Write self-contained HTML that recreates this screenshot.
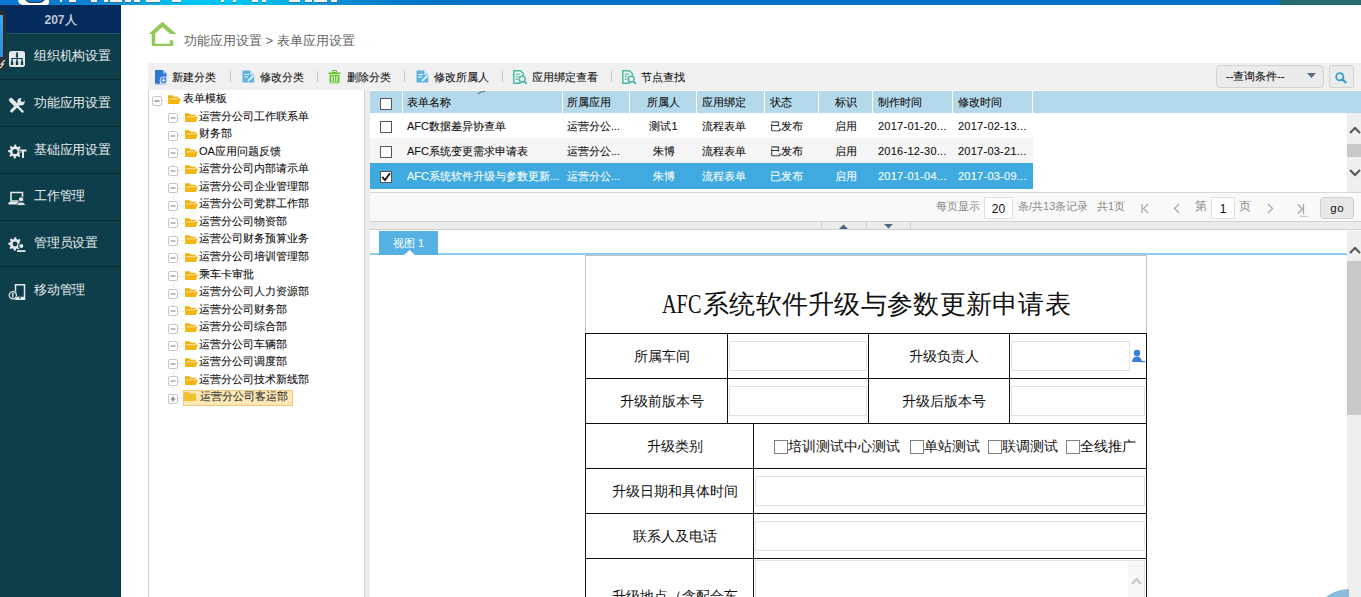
<!DOCTYPE html><html><head><meta charset="utf-8"><style>
*{box-sizing:border-box;margin:0;padding:0}
html,body{width:1361px;height:597px;overflow:hidden;background:#fff;font-family:"Liberation Sans",sans-serif;position:relative}
.a{position:absolute}
svg.i{position:absolute;overflow:visible}
#band{left:0;top:0;width:1361px;height:5px;overflow:hidden;background:linear-gradient(90deg,#0a78d2 0px,#0a82d4 90px,#0a9edd 130px,#04c2ee 180px,#06c6f0 240px,#0aa6df 300px,#0a8cd3 345px,#0078c8 400px,#0070c4 460px,#0070c4 1280px,#246a6e 1280px)}
#side{left:0;top:5px;width:121px;height:592px;background:#0f3e4b}
#navy{left:0;top:0;width:121px;height:29px;background:#052a5c;border-bottom:1px solid #245564;color:#c0c8d6;font-weight:bold;font-size:12px;text-align:center;line-height:30px}
.mi{position:absolute;left:0;width:121px;height:47px;border-top:1px solid #0a2c35;color:#e4eaec;font-size:13px;letter-spacing:-0.25px}
.mt{position:absolute;left:34px;line-height:16px;white-space:nowrap;color:#e4eaec;font-size:13px;letter-spacing:-0.25px}
#crumb{left:184px;top:32px;font-size:13px;color:#666;line-height:18px;white-space:nowrap}
#tb{left:148px;top:63px;width:1213px;height:27px;background:#f0f0f0}
.tbi{position:absolute;top:6px;font-size:11px;color:#111;line-height:16px;white-space:nowrap;-webkit-text-stroke-width:0.1px}
.sep{position:absolute;top:8px;width:1px;height:11px;background:#c8c8c8}
#tree{left:148px;top:90px;width:217px;height:512px;border:1px solid #d4d4d4;border-top:none;background:#fff}
.tn{position:absolute;height:16px;font-size:11px;line-height:13px;color:#111;white-space:nowrap;-webkit-text-stroke-width:0.1px}
#split1{left:365px;top:90px;width:5px;height:507px;background:#ececec}
#grid{left:370px;top:91px;width:991px;height:101px;background:#fff}
.gh{position:absolute;top:0;height:22px;background:#b4d9ea;font-size:11px;line-height:22px;color:#111;-webkit-text-stroke-width:0.1px;white-space:nowrap;padding-left:4px;border-right:1px solid #fff}
.gr{position:absolute;left:0;width:663px;height:25px}
.gc{position:absolute;top:1px;font-size:11px;line-height:25px;color:#111;-webkit-text-stroke-width:0.1px;white-space:nowrap;padding-left:4px;overflow:hidden}
.ck{position:absolute;width:12px;height:12px;border:1px solid #555;background:#fff}
#pager{left:370px;top:192px;width:991px;height:30px;background:#f9f9f9;border-top:1px solid #d8d8d8;border-bottom:1px solid #d0d0d0}
.pg{position:absolute;font-size:11px;color:#888;line-height:16px;white-space:nowrap;top:5px}
.pin{position:absolute;top:4px;height:22px;background:#fff;border:1px solid #e0e0e0;font-size:12px;color:#111;text-align:center;line-height:22px}
#bar2{left:370px;top:222px;width:991px;height:8px;background:#ececec;border-bottom:1px solid #d0d0d0}
#view{left:370px;top:230px;width:977px;height:367px;background:#fff;overflow:hidden}
.fl{position:absolute;font-size:14.4px;color:#111;white-space:nowrap;line-height:18px}
.in{position:absolute;border:1px solid #e2e2e2;background:#fff}
.sb{position:absolute;background:#efefef}
</style></head><body>
<div id="band" class="a">
<div class="a" style="left:18px;top:0;width:31px;height:4.5px;background:#fff;border-radius:0 0 6px 14px"></div>
<div class="a" style="left:24px;top:-4px;width:22px;height:6.5px;border:1.6px solid #333;border-top:none;border-radius:0 0 11px 11px;background:#0a7ad2"></div>
<div class="a" style="left:60px;top:0;width:2px;height:1.5px;background:#f4f4f4;box-shadow:0 0.6px 0 #555"></div>
<div class="a" style="left:69px;top:0;width:7px;height:1.5px;background:#f4f4f4;box-shadow:0 0.6px 0 #555"></div>
<div class="a" style="left:91px;top:0;width:6px;height:2px;background:#f4f4f4;box-shadow:0 0.6px 0 #555"></div>
<div class="a" style="left:104px;top:0;width:4px;height:1.5px;background:#f4f4f4;box-shadow:0 0.6px 0 #555"></div>
<div class="a" style="left:110px;top:0;width:12px;height:2px;background:#f4f4f4;box-shadow:0 0.6px 0 #555"></div>
<div class="a" style="left:125px;top:0;width:6px;height:2px;background:#f4f4f4;box-shadow:0 0.6px 0 #555"></div>
<div class="a" style="left:134px;top:0;width:6px;height:2px;background:#f4f4f4;box-shadow:0 0.6px 0 #555"></div>
<div class="a" style="left:146px;top:0;width:14px;height:2px;background:#f4f4f4;box-shadow:0 0.6px 0 #555"></div>
<div class="a" style="left:172px;top:0;width:9px;height:2px;background:#f4f4f4;box-shadow:0 0.6px 0 #555"></div>
<div class="a" style="left:221px;top:0;width:3px;height:1.5px;background:#f4f4f4;box-shadow:0 0.6px 0 #555"></div>
<div class="a" style="left:233px;top:0;width:3px;height:1.5px;background:#f4f4f4;box-shadow:0 0.6px 0 #555"></div>
<div class="a" style="left:252px;top:0;width:6px;height:1.5px;background:#f4f4f4;box-shadow:0 0.6px 0 #555"></div>
<div class="a" style="left:262px;top:0;width:4px;height:1.5px;background:#f4f4f4;box-shadow:0 0.6px 0 #555"></div>
<div class="a" style="left:289px;top:0;width:11px;height:2px;background:#f4f4f4;box-shadow:0 0.6px 0 #555"></div>
<div class="a" style="left:305px;top:0;width:7px;height:2px;background:#f4f4f4;box-shadow:0 0.6px 0 #555"></div>
<div class="a" style="left:314px;top:0;width:13px;height:2px;background:#f4f4f4;box-shadow:0 0.6px 0 #555"></div>
<div class="a" style="left:331px;top:0;width:6px;height:2px;background:#f4f4f4;box-shadow:0 0.6px 0 #555"></div>
</div>
<div class="a" style="left:0;top:11px;width:6px;height:59px;background:#2e2e2e;border-radius:0 3px 3px 0;z-index:5"></div>
<div class="a" style="left:0;top:15px;width:2.5px;height:42px;background:linear-gradient(#3aa6f2,#2b8fe0);z-index:6"></div>
<svg class="i" style="left:0;top:60px;z-index:6" width="5" height="8"><path d="M4.8 0 L1.2 4.2 H3.4 L0.2 8" fill="none" stroke="#d8d8d8" stroke-width="1.3"/></svg>
<div id="side" class="a"><div id="navy" class="a">207人</div>
<div class="a" style="left:0;top:74.4px;width:121px;height:1px;background:#0a2c35"></div>
<div class="a" style="left:0;top:121.1px;width:121px;height:1px;background:#0a2c35"></div>
<div class="a" style="left:0;top:167.9px;width:121px;height:1px;background:#0a2c35"></div>
<div class="a" style="left:0;top:214.6px;width:121px;height:1px;background:#0a2c35"></div>
<div class="a" style="left:0;top:261.4px;width:121px;height:1px;background:#0a2c35"></div>
<span class="mt" style="top:43.1px">组织机构设置</span>
<span class="mt" style="top:89.8px">功能应用设置</span>
<span class="mt" style="top:136.6px">基础应用设置</span>
<span class="mt" style="top:183.3px">工作管理</span>
<span class="mt" style="top:230.1px">管理员设置</span>
<span class="mt" style="top:276.9px">移动管理</span>
<svg class="i" style="left:9px;top:46px" width="16" height="16"><rect x="0" y="0" width="16" height="16" rx="2.5" fill="#e4eaec"/><g fill="#0f3e4b"><circle cx="8" cy="2.2" r="1"/><rect x="6.9" y="3.2" width="2.2" height="2.8"/><rect x="7.5" y="5.8" width="1" height="1.4"/><rect x="2.2" y="7" width="11.6" height="1"/><rect x="2.5" y="7.5" width="1" height="1.6"/><rect x="7.5" y="7.5" width="1" height="1.6"/><rect x="12.5" y="7.5" width="1" height="1.6"/><circle cx="3" cy="10" r="1"/><circle cx="8" cy="10" r="1"/><circle cx="13" cy="10" r="1"/><rect x="1.8" y="10.8" width="2.4" height="3.2"/><rect x="6.8" y="10.8" width="2.4" height="3.2"/><rect x="11.8" y="10.8" width="2.4" height="3.2"/></g></svg>
<svg class="i" style="left:9px;top:93px" width="16" height="16"><g stroke="#e4eaec" fill="none"><path d="M2 2 L6.2 6.2" stroke-width="4.2" stroke-linecap="round"/><path d="M6 6 L13.6 13.6" stroke-width="2.2" stroke-linecap="round"/><path d="M2.6 13 L10.6 5" stroke-width="3" stroke-linecap="round"/></g><circle cx="12" cy="3.8" r="3.7" fill="#e4eaec"/><circle cx="13.6" cy="2" r="2" fill="#0f3e4b"/></svg>
<svg class="i" style="left:8px;top:139px" width="19" height="15"><path d="M13.99 7.16 L13.92 8.53 L11.71 9.18 L11.29 10.07 L12.19 12.20 L11.17 13.12 L9.14 12.02 L8.21 12.35 L7.34 14.49 L5.97 14.42 L5.32 12.21 L4.43 11.79 L2.30 12.69 L1.38 11.67 L2.48 9.64 L2.15 8.71 L0.01 7.84 L0.08 6.47 L2.29 5.82 L2.71 4.93 L1.81 2.80 L2.83 1.88 L4.86 2.98 L5.79 2.65 L6.66 0.51 L8.03 0.58 L8.68 2.79 L9.57 3.21 L11.70 2.31 L12.62 3.33 L11.52 5.36 L11.85 6.29Z" fill="#e4eaec"/><circle cx="7" cy="7.5" r="2.6" fill="#0f3e4b"/><rect x="11" y="5.5" width="8" height="3" fill="#0f3e4b"/><path d="M11.5 5.5 H18.5 V7.5 H16 V14 H14 V7.5 H11.5Z" fill="#e4eaec"/></svg>
<svg class="i" style="left:8px;top:187px" width="18" height="14"><path d="M3 0.5 H14.5 V9 H3Z" fill="none" stroke="#e4eaec" stroke-width="1.6"/><path d="M0.5 10 H12 V12.5 H0.5Z" fill="#e4eaec"/><circle cx="13" cy="7.3" r="2.6" fill="#e4eaec" stroke="#0f3e4b" stroke-width="1"/><path d="M8.5 13.5 Q9 10 13 10 Q17 10 17.5 13.5Z" fill="#e4eaec" stroke="#0f3e4b" stroke-width="0.8"/></svg>
<svg class="i" style="left:8px;top:232px" width="18" height="16"><path d="M13.79 6.67 L13.73 8.00 L11.71 8.68 L11.29 9.57 L12.04 11.57 L11.05 12.46 L9.14 11.52 L8.21 11.85 L7.33 13.79 L6.00 13.73 L5.32 11.71 L4.43 11.29 L2.43 12.04 L1.54 11.05 L2.48 9.14 L2.15 8.21 L0.21 7.33 L0.27 6.00 L2.29 5.32 L2.71 4.43 L1.96 2.43 L2.95 1.54 L4.86 2.48 L5.79 2.15 L6.67 0.21 L8.00 0.27 L8.68 2.29 L9.57 2.71 L11.57 1.96 L12.46 2.95 L11.52 4.86 L11.85 5.79Z" fill="#e4eaec"/><circle cx="7" cy="7" r="2.4" fill="#0f3e4b"/><circle cx="13.3" cy="9" r="3.2" fill="#0f3e4b"/><circle cx="13.3" cy="9" r="2" fill="#e4eaec"/><rect x="9" y="13.2" width="8.5" height="1.8" fill="#e4eaec"/></svg>
<svg class="i" style="left:8px;top:279px" width="18" height="16"><path d="M7.5 0.8 H16.5 V15.2 H7.5Z" fill="none" stroke="#e4eaec" stroke-width="1.5"/><rect x="7" y="12.8" width="10" height="2.6" fill="#e4eaec"/><rect x="11" y="13.5" width="2" height="1" fill="#0f3e4b"/><circle cx="4.8" cy="11.2" r="4.4" fill="#0f3e4b"/><circle cx="4.8" cy="11.2" r="3.6" fill="none" stroke="#e4eaec" stroke-width="1.2"/><circle cx="4.8" cy="10" r="1.1" fill="#e4eaec"/><rect x="4.2" y="10.5" width="1.2" height="3.2" fill="#e4eaec"/></svg>
</div>
<div class="a" style="left:120px;top:33px;width:1px;height:564px;background:#0a3441"></div>
<div id="crumb" class="a">功能应用设置 &gt; 表单应用设置</div>
<svg class="i" style="left:148px;top:21px" width="29" height="26"><path d="M14.5 0.8 L28.4 13.1 L22.2 13.1 L14.5 6.0 L7.2 12.5 L7.2 22.8 L21.8 22.8 L21.8 19.3 L25.3 19.3 L25.3 25.0 L3.7 25.0 L3.7 13.1 L0.6 13.1Z" fill="#92c957"/></svg>
<div id="tb" class="a">
<span class="tbi" style="left:24px">新建分类</span>
<span class="tbi" style="left:112px">修改分类</span>
<span class="tbi" style="left:199px">删除分类</span>
<span class="tbi" style="left:286px">修改所属人</span>
<span class="tbi" style="left:384px">应用绑定查看</span>
<span class="tbi" style="left:493px">节点查找</span>
<div class="sep" style="left:82px"></div>
<div class="sep" style="left:169px"></div>
<div class="sep" style="left:256px"></div>
<div class="sep" style="left:354px"></div>
<div class="sep" style="left:463px"></div>
<svg class="i" style="left:7px;top:7px" width="13" height="15"><path d="M0 0 H8 L11.5 3.5 V10 H0Z" fill="#2f77cf"/><path d="M0 10 H5 V14 H0Z" fill="#2f77cf"/><path d="M8 0 V3.5 H11.5" fill="#9cc4ee"/><circle cx="8.5" cy="10.3" r="3.8" fill="#fff"/><circle cx="8.5" cy="10.3" r="3" fill="#2f77cf"/><path d="M8.5 8.3 V12.3 M6.5 10.3 H10.5" stroke="#fff" stroke-width="1.1"/><rect x="0" y="13.6" width="11" height="0.9" fill="#7fb1e6"/></svg>
<svg class="i" style="left:94px;top:7px" width="13" height="13"><path d="M0.5 0.5 H8 L12.2 4.7 V12.5 H0.5Z" fill="#5db4e2"/><path d="M8 0.5 V4.7 H12.2" fill="#bfe2f5"/><path d="M2.5 4.5 H7 M2.5 7 H6" stroke="#fff" stroke-width="1.1"/><path d="M6 11 L11.5 5.5" stroke="#fff" stroke-width="1.6"/></svg>
<svg class="i" style="left:268px;top:7px" width="13" height="13"><path d="M0.5 0.5 H8 L12.2 4.7 V12.5 H0.5Z" fill="#5db4e2"/><path d="M8 0.5 V4.7 H12.2" fill="#bfe2f5"/><path d="M2.5 4.5 H7 M2.5 7 H6" stroke="#fff" stroke-width="1.1"/><path d="M6 11 L11.5 5.5" stroke="#fff" stroke-width="1.6"/></svg>
<svg class="i" style="left:180px;top:7px" width="13" height="14"><path d="M0.5 2.5 H12.5 V4 H0.5Z" fill="#62c22a"/><path d="M4.5 0.5 H8.5 V2.5 H4.5Z" fill="none" stroke="#62c22a" stroke-width="1"/><path d="M1.5 4.8 H11.5 V12.5 H1.5Z" fill="#62c22a"/><path d="M4 6 V11.5 M6.5 6 V11.5 M9 6 V11.5" stroke="#fff" stroke-width="1.1"/><rect x="1" y="12.8" width="11" height="0.8" fill="#a6de7a"/></svg>
<svg class="i" style="left:365px;top:7px" width="15" height="14"><path d="M0.8 0.8 H7.5 L10.5 3.8 V6.5 L7 9.5 V13.2 H0.8Z" fill="#e2f3ef" stroke="#52b9a4" stroke-width="1.5"/><path d="M2.8 4.2 H7 M2.8 6.8 H5.5 M2.8 9.4 H4.8" stroke="#52b9a4" stroke-width="1.1"/><circle cx="9.2" cy="9.2" r="2.9" fill="#fff" stroke="#52b9a4" stroke-width="1.6"/><path d="M11.3 11.3 L13.9 13.9" stroke="#52b9a4" stroke-width="1.8"/></svg>
<svg class="i" style="left:474px;top:7px" width="15" height="14"><path d="M0.8 0.8 H7.5 L10.5 3.8 V6.5 L7 9.5 V13.2 H0.8Z" fill="#e2f3ef" stroke="#52b9a4" stroke-width="1.5"/><path d="M2.8 4.2 H7 M2.8 6.8 H5.5 M2.8 9.4 H4.8" stroke="#52b9a4" stroke-width="1.1"/><circle cx="9.2" cy="9.2" r="2.9" fill="#fff" stroke="#52b9a4" stroke-width="1.6"/><path d="M11.3 11.3 L13.9 13.9" stroke="#52b9a4" stroke-width="1.8"/></svg>
<div class="a" style="left:1068px;top:1.5px;width:108px;height:23px;background:#ebebeb;border:1px solid #d2d2d2;border-radius:4px"></div>
<span class="tbi" style="left:1078px;top:5px;color:#111">--查询条件--</span>
<svg class="i" style="left:1159px;top:10px" width="9" height="5"><path d="M0 0 H9 L4.5 5Z" fill="#5a6b85"/></svg>
<div class="a" style="left:1181px;top:1.5px;width:25px;height:23px;background:#ebebeb;border:1px solid #d2d2d2;border-radius:3px"></div>
<svg class="i" style="left:1187px;top:9px" width="12" height="11"><circle cx="4.8" cy="4.8" r="3.6" fill="none" stroke="#3a9fd2" stroke-width="1.8"/><path d="M7.4 7.4 L10.6 10.4" stroke="#3a9fd2" stroke-width="2.2" stroke-linecap="round"/></svg>
</div>
<div id="tree" class="a">
<svg class="i" style="left:3px;top:5.50px" width="10" height="10"><rect x="0.5" y="0.5" width="9" height="9" rx="1.5" fill="#fff" stroke="#c6c6c6" stroke-width="1"/><path d="M2.5 5 H7.5" stroke="#555" stroke-width="1"/></svg>
<div class="a" style="left:13px;top:10px;width:5px;height:0;border-top:1px dotted #e2e2e2"></div>
<svg class="i" style="left:19px;top:5.00px" width="13" height="9"><path d="M0 0.3 H4.6 L5.6 1.8 H10.6 V3.4 H1.6 L0 9Z" fill="#efb10c"/><path d="M1.6 3.4 H12.8 L11 9 H0Z" fill="#f3b60e"/><path d="M2 3.9 H10.5" stroke="#fff" stroke-width="0.6" opacity="0.8"/></svg>
<span class="tn" style="left:34px;top:2px">表单模板</span>
<div class="a" style="left:24px;top:16px;width:0;height:288px;border-left:1px dotted #e2e2e2"></div>
<div class="a" style="left:29px;top:27.55px;width:6px;height:0;border-top:1px dotted #e2e2e2"></div>
<svg class="i" style="left:19px;top:23.05px" width="10" height="10"><rect x="0.5" y="0.5" width="9" height="9" rx="1.5" fill="#fff" stroke="#c6c6c6" stroke-width="1"/><path d="M2.5 5 H7.5" stroke="#7a7a7a" stroke-width="1"/></svg>
<svg class="i" style="left:35.5px;top:22.55px" width="13" height="9"><path d="M0 0.3 H4.6 L5.6 1.8 H10.6 V3.4 H1.6 L0 9Z" fill="#efb10c"/><path d="M1.6 3.4 H12.8 L11 9 H0Z" fill="#f3b60e"/><path d="M2 3.9 H10.5" stroke="#fff" stroke-width="0.6" opacity="0.8"/></svg>
<span class="tn" style="left:50px;top:19.55px">运营分公司工作联系单</span>
<div class="a" style="left:29px;top:45.10px;width:6px;height:0;border-top:1px dotted #e2e2e2"></div>
<svg class="i" style="left:19px;top:40.60px" width="10" height="10"><rect x="0.5" y="0.5" width="9" height="9" rx="1.5" fill="#fff" stroke="#c6c6c6" stroke-width="1"/><path d="M2.5 5 H7.5" stroke="#7a7a7a" stroke-width="1"/></svg>
<svg class="i" style="left:35.5px;top:40.10px" width="13" height="9"><path d="M0 0.3 H4.6 L5.6 1.8 H10.6 V3.4 H1.6 L0 9Z" fill="#efb10c"/><path d="M1.6 3.4 H12.8 L11 9 H0Z" fill="#f3b60e"/><path d="M2 3.9 H10.5" stroke="#fff" stroke-width="0.6" opacity="0.8"/></svg>
<span class="tn" style="left:50px;top:37.10px">财务部</span>
<div class="a" style="left:29px;top:62.65px;width:6px;height:0;border-top:1px dotted #e2e2e2"></div>
<svg class="i" style="left:19px;top:58.15px" width="10" height="10"><rect x="0.5" y="0.5" width="9" height="9" rx="1.5" fill="#fff" stroke="#c6c6c6" stroke-width="1"/><path d="M2.5 5 H7.5" stroke="#7a7a7a" stroke-width="1"/></svg>
<svg class="i" style="left:35.5px;top:57.65px" width="13" height="9"><path d="M0 0.3 H4.6 L5.6 1.8 H10.6 V3.4 H1.6 L0 9Z" fill="#efb10c"/><path d="M1.6 3.4 H12.8 L11 9 H0Z" fill="#f3b60e"/><path d="M2 3.9 H10.5" stroke="#fff" stroke-width="0.6" opacity="0.8"/></svg>
<span class="tn" style="left:50px;top:54.65px">OA应用问题反馈</span>
<div class="a" style="left:29px;top:80.20px;width:6px;height:0;border-top:1px dotted #e2e2e2"></div>
<svg class="i" style="left:19px;top:75.70px" width="10" height="10"><rect x="0.5" y="0.5" width="9" height="9" rx="1.5" fill="#fff" stroke="#c6c6c6" stroke-width="1"/><path d="M2.5 5 H7.5" stroke="#7a7a7a" stroke-width="1"/></svg>
<svg class="i" style="left:35.5px;top:75.20px" width="13" height="9"><path d="M0 0.3 H4.6 L5.6 1.8 H10.6 V3.4 H1.6 L0 9Z" fill="#efb10c"/><path d="M1.6 3.4 H12.8 L11 9 H0Z" fill="#f3b60e"/><path d="M2 3.9 H10.5" stroke="#fff" stroke-width="0.6" opacity="0.8"/></svg>
<span class="tn" style="left:50px;top:72.20px">运营分公司内部请示单</span>
<div class="a" style="left:29px;top:97.75px;width:6px;height:0;border-top:1px dotted #e2e2e2"></div>
<svg class="i" style="left:19px;top:93.25px" width="10" height="10"><rect x="0.5" y="0.5" width="9" height="9" rx="1.5" fill="#fff" stroke="#c6c6c6" stroke-width="1"/><path d="M2.5 5 H7.5" stroke="#7a7a7a" stroke-width="1"/></svg>
<svg class="i" style="left:35.5px;top:92.75px" width="13" height="9"><path d="M0 0.3 H4.6 L5.6 1.8 H10.6 V3.4 H1.6 L0 9Z" fill="#efb10c"/><path d="M1.6 3.4 H12.8 L11 9 H0Z" fill="#f3b60e"/><path d="M2 3.9 H10.5" stroke="#fff" stroke-width="0.6" opacity="0.8"/></svg>
<span class="tn" style="left:50px;top:89.75px">运营分公司企业管理部</span>
<div class="a" style="left:29px;top:115.30px;width:6px;height:0;border-top:1px dotted #e2e2e2"></div>
<svg class="i" style="left:19px;top:110.80px" width="10" height="10"><rect x="0.5" y="0.5" width="9" height="9" rx="1.5" fill="#fff" stroke="#c6c6c6" stroke-width="1"/><path d="M2.5 5 H7.5" stroke="#7a7a7a" stroke-width="1"/></svg>
<svg class="i" style="left:35.5px;top:110.30px" width="13" height="9"><path d="M0 0.3 H4.6 L5.6 1.8 H10.6 V3.4 H1.6 L0 9Z" fill="#efb10c"/><path d="M1.6 3.4 H12.8 L11 9 H0Z" fill="#f3b60e"/><path d="M2 3.9 H10.5" stroke="#fff" stroke-width="0.6" opacity="0.8"/></svg>
<span class="tn" style="left:50px;top:107.30px">运营分公司党群工作部</span>
<div class="a" style="left:29px;top:132.85px;width:6px;height:0;border-top:1px dotted #e2e2e2"></div>
<svg class="i" style="left:19px;top:128.35px" width="10" height="10"><rect x="0.5" y="0.5" width="9" height="9" rx="1.5" fill="#fff" stroke="#c6c6c6" stroke-width="1"/><path d="M2.5 5 H7.5" stroke="#7a7a7a" stroke-width="1"/></svg>
<svg class="i" style="left:35.5px;top:127.85px" width="13" height="9"><path d="M0 0.3 H4.6 L5.6 1.8 H10.6 V3.4 H1.6 L0 9Z" fill="#efb10c"/><path d="M1.6 3.4 H12.8 L11 9 H0Z" fill="#f3b60e"/><path d="M2 3.9 H10.5" stroke="#fff" stroke-width="0.6" opacity="0.8"/></svg>
<span class="tn" style="left:50px;top:124.85px">运营分公司物资部</span>
<div class="a" style="left:29px;top:150.40px;width:6px;height:0;border-top:1px dotted #e2e2e2"></div>
<svg class="i" style="left:19px;top:145.90px" width="10" height="10"><rect x="0.5" y="0.5" width="9" height="9" rx="1.5" fill="#fff" stroke="#c6c6c6" stroke-width="1"/><path d="M2.5 5 H7.5" stroke="#7a7a7a" stroke-width="1"/></svg>
<svg class="i" style="left:35.5px;top:145.40px" width="13" height="9"><path d="M0 0.3 H4.6 L5.6 1.8 H10.6 V3.4 H1.6 L0 9Z" fill="#efb10c"/><path d="M1.6 3.4 H12.8 L11 9 H0Z" fill="#f3b60e"/><path d="M2 3.9 H10.5" stroke="#fff" stroke-width="0.6" opacity="0.8"/></svg>
<span class="tn" style="left:50px;top:142.40px">运营公司财务预算业务</span>
<div class="a" style="left:29px;top:167.95px;width:6px;height:0;border-top:1px dotted #e2e2e2"></div>
<svg class="i" style="left:19px;top:163.45px" width="10" height="10"><rect x="0.5" y="0.5" width="9" height="9" rx="1.5" fill="#fff" stroke="#c6c6c6" stroke-width="1"/><path d="M2.5 5 H7.5" stroke="#7a7a7a" stroke-width="1"/></svg>
<svg class="i" style="left:35.5px;top:162.95px" width="13" height="9"><path d="M0 0.3 H4.6 L5.6 1.8 H10.6 V3.4 H1.6 L0 9Z" fill="#efb10c"/><path d="M1.6 3.4 H12.8 L11 9 H0Z" fill="#f3b60e"/><path d="M2 3.9 H10.5" stroke="#fff" stroke-width="0.6" opacity="0.8"/></svg>
<span class="tn" style="left:50px;top:159.95px">运营分公司培训管理部</span>
<div class="a" style="left:29px;top:185.50px;width:6px;height:0;border-top:1px dotted #e2e2e2"></div>
<svg class="i" style="left:19px;top:181.00px" width="10" height="10"><rect x="0.5" y="0.5" width="9" height="9" rx="1.5" fill="#fff" stroke="#c6c6c6" stroke-width="1"/><path d="M2.5 5 H7.5" stroke="#7a7a7a" stroke-width="1"/></svg>
<svg class="i" style="left:35.5px;top:180.50px" width="13" height="9"><path d="M0 0.3 H4.6 L5.6 1.8 H10.6 V3.4 H1.6 L0 9Z" fill="#efb10c"/><path d="M1.6 3.4 H12.8 L11 9 H0Z" fill="#f3b60e"/><path d="M2 3.9 H10.5" stroke="#fff" stroke-width="0.6" opacity="0.8"/></svg>
<span class="tn" style="left:50px;top:177.50px">乘车卡审批</span>
<div class="a" style="left:29px;top:203.05px;width:6px;height:0;border-top:1px dotted #e2e2e2"></div>
<svg class="i" style="left:19px;top:198.55px" width="10" height="10"><rect x="0.5" y="0.5" width="9" height="9" rx="1.5" fill="#fff" stroke="#c6c6c6" stroke-width="1"/><path d="M2.5 5 H7.5" stroke="#7a7a7a" stroke-width="1"/></svg>
<svg class="i" style="left:35.5px;top:198.05px" width="13" height="9"><path d="M0 0.3 H4.6 L5.6 1.8 H10.6 V3.4 H1.6 L0 9Z" fill="#efb10c"/><path d="M1.6 3.4 H12.8 L11 9 H0Z" fill="#f3b60e"/><path d="M2 3.9 H10.5" stroke="#fff" stroke-width="0.6" opacity="0.8"/></svg>
<span class="tn" style="left:50px;top:195.05px">运营分公司人力资源部</span>
<div class="a" style="left:29px;top:220.60px;width:6px;height:0;border-top:1px dotted #e2e2e2"></div>
<svg class="i" style="left:19px;top:216.10px" width="10" height="10"><rect x="0.5" y="0.5" width="9" height="9" rx="1.5" fill="#fff" stroke="#c6c6c6" stroke-width="1"/><path d="M2.5 5 H7.5" stroke="#7a7a7a" stroke-width="1"/></svg>
<svg class="i" style="left:35.5px;top:215.60px" width="13" height="9"><path d="M0 0.3 H4.6 L5.6 1.8 H10.6 V3.4 H1.6 L0 9Z" fill="#efb10c"/><path d="M1.6 3.4 H12.8 L11 9 H0Z" fill="#f3b60e"/><path d="M2 3.9 H10.5" stroke="#fff" stroke-width="0.6" opacity="0.8"/></svg>
<span class="tn" style="left:50px;top:212.60px">运营分公司财务部</span>
<div class="a" style="left:29px;top:238.15px;width:6px;height:0;border-top:1px dotted #e2e2e2"></div>
<svg class="i" style="left:19px;top:233.65px" width="10" height="10"><rect x="0.5" y="0.5" width="9" height="9" rx="1.5" fill="#fff" stroke="#c6c6c6" stroke-width="1"/><path d="M2.5 5 H7.5" stroke="#7a7a7a" stroke-width="1"/></svg>
<svg class="i" style="left:35.5px;top:233.15px" width="13" height="9"><path d="M0 0.3 H4.6 L5.6 1.8 H10.6 V3.4 H1.6 L0 9Z" fill="#efb10c"/><path d="M1.6 3.4 H12.8 L11 9 H0Z" fill="#f3b60e"/><path d="M2 3.9 H10.5" stroke="#fff" stroke-width="0.6" opacity="0.8"/></svg>
<span class="tn" style="left:50px;top:230.15px">运营分公司综合部</span>
<div class="a" style="left:29px;top:255.70px;width:6px;height:0;border-top:1px dotted #e2e2e2"></div>
<svg class="i" style="left:19px;top:251.20px" width="10" height="10"><rect x="0.5" y="0.5" width="9" height="9" rx="1.5" fill="#fff" stroke="#c6c6c6" stroke-width="1"/><path d="M2.5 5 H7.5" stroke="#7a7a7a" stroke-width="1"/></svg>
<svg class="i" style="left:35.5px;top:250.70px" width="13" height="9"><path d="M0 0.3 H4.6 L5.6 1.8 H10.6 V3.4 H1.6 L0 9Z" fill="#efb10c"/><path d="M1.6 3.4 H12.8 L11 9 H0Z" fill="#f3b60e"/><path d="M2 3.9 H10.5" stroke="#fff" stroke-width="0.6" opacity="0.8"/></svg>
<span class="tn" style="left:50px;top:247.70px">运营分公司车辆部</span>
<div class="a" style="left:29px;top:273.25px;width:6px;height:0;border-top:1px dotted #e2e2e2"></div>
<svg class="i" style="left:19px;top:268.75px" width="10" height="10"><rect x="0.5" y="0.5" width="9" height="9" rx="1.5" fill="#fff" stroke="#c6c6c6" stroke-width="1"/><path d="M2.5 5 H7.5" stroke="#7a7a7a" stroke-width="1"/></svg>
<svg class="i" style="left:35.5px;top:268.25px" width="13" height="9"><path d="M0 0.3 H4.6 L5.6 1.8 H10.6 V3.4 H1.6 L0 9Z" fill="#efb10c"/><path d="M1.6 3.4 H12.8 L11 9 H0Z" fill="#f3b60e"/><path d="M2 3.9 H10.5" stroke="#fff" stroke-width="0.6" opacity="0.8"/></svg>
<span class="tn" style="left:50px;top:265.25px">运营分公司调度部</span>
<div class="a" style="left:29px;top:290.80px;width:6px;height:0;border-top:1px dotted #e2e2e2"></div>
<svg class="i" style="left:19px;top:286.30px" width="10" height="10"><rect x="0.5" y="0.5" width="9" height="9" rx="1.5" fill="#fff" stroke="#c6c6c6" stroke-width="1"/><path d="M2.5 5 H7.5" stroke="#7a7a7a" stroke-width="1"/></svg>
<svg class="i" style="left:35.5px;top:285.80px" width="13" height="9"><path d="M0 0.3 H4.6 L5.6 1.8 H10.6 V3.4 H1.6 L0 9Z" fill="#efb10c"/><path d="M1.6 3.4 H12.8 L11 9 H0Z" fill="#f3b60e"/><path d="M2 3.9 H10.5" stroke="#fff" stroke-width="0.6" opacity="0.8"/></svg>
<span class="tn" style="left:50px;top:282.80px">运营分公司技术新线部</span>
<div class="a" style="left:29px;top:308.35px;width:6px;height:0;border-top:1px dotted #e2e2e2"></div>
<div class="a" style="left:34px;top:299.85px;width:110px;height:16.5px;background:#fde8b6;border:1px solid #f6c57c"></div>
<svg class="i" style="left:19px;top:304.35px" width="10" height="10"><rect x="0.5" y="0.5" width="9" height="9" rx="1.5" fill="#fff" stroke="#c6c6c6" stroke-width="1"/><path d="M2.5 5 H7.5" stroke="#7a7a7a" stroke-width="1"/><path d="M5 2.3 V7.7" stroke="#666" stroke-width="1.1"/></svg>
<svg class="i" style="left:35px;top:302.35px" width="13" height="9"><path d="M0 0 H4.6 L5.6 1.6 H12 V9 H0Z" fill="#f2c02e"/></svg>
<span class="tn" style="left:50.5px;top:300.35px;color:#333">运营分公司客运部</span>
</div>
<div id="split1" class="a"></div>
<div id="grid" class="a">
<div class="gh" style="left:0px;width:33px;"></div>
<div class="gh" style="left:33px;width:160px;">表单名称</div>
<div class="gh" style="left:193px;width:67px;">所属应用</div>
<div class="gh" style="left:260px;width:67px;text-align:center;padding:0;">所属人</div>
<div class="gh" style="left:327px;width:68px;padding-left:5px;">应用绑定</div>
<div class="gh" style="left:395px;width:54px;padding-left:5px;">状态</div>
<div class="gh" style="left:449px;width:54px;text-align:center;padding:0;">标识</div>
<div class="gh" style="left:503px;width:80px;padding-left:5px;">制作时间</div>
<div class="gh" style="left:583px;width:80px;padding-left:5px;">修改时间</div>
<div class="gh" style="left:663px;width:328px;border:none"></div>
<div class="ck" style="left:10px;top:7px"></div>
<div class="gr" style="top:22px;height:24.7px;background:#fff"></div>
<div class="gr" style="top:22px;background:transparent">
<div class="ck" style="left:10px;top:8px"></div>
<div class="gc" style="left:33px;width:160px;color:#111;">AFC数据差异协查单</div>
<div class="gc" style="left:193px;width:67px;color:#111;">运营分公...</div>
<div class="gc" style="left:260px;width:67px;color:#111;text-align:center;padding:0;">测试1</div>
<div class="gc" style="left:327px;width:68px;color:#111;padding-left:5px;">流程表单</div>
<div class="gc" style="left:395px;width:54px;color:#111;padding-left:5px;">已发布</div>
<div class="gc" style="left:449px;width:54px;color:#111;text-align:center;padding:0;">启用</div>
<div class="gc" style="left:503px;width:80px;color:#111;padding-left:5px;letter-spacing:0.25px;">2017-01-20...</div>
<div class="gc" style="left:583px;width:80px;color:#111;padding-left:5px;letter-spacing:0.25px;">2017-02-13...</div>
</div>
<div class="gr" style="top:46.7px;height:25.3px;background:#f5f5f5"></div>
<div class="gr" style="top:47px;background:transparent">
<div class="ck" style="left:10px;top:8px"></div>
<div class="gc" style="left:33px;width:160px;color:#111;">AFC系统变更需求申请表</div>
<div class="gc" style="left:193px;width:67px;color:#111;">运营分公...</div>
<div class="gc" style="left:260px;width:67px;color:#111;text-align:center;padding:0;">朱博</div>
<div class="gc" style="left:327px;width:68px;color:#111;padding-left:5px;">流程表单</div>
<div class="gc" style="left:395px;width:54px;color:#111;padding-left:5px;">已发布</div>
<div class="gc" style="left:449px;width:54px;color:#111;text-align:center;padding:0;">启用</div>
<div class="gc" style="left:503px;width:80px;color:#111;padding-left:5px;letter-spacing:0.25px;">2016-12-30...</div>
<div class="gc" style="left:583px;width:80px;color:#111;padding-left:5px;letter-spacing:0.25px;">2017-03-21...</div>
</div>
<div class="gr" style="top:72px;height:26px;background:#3eaadf"></div>
<div class="gr" style="top:72px;background:transparent">
<div class="ck" style="left:10px;top:8px"></div><svg class="i" style="left:11px;top:9px" width="10" height="10"><path d="M1.2 4.8 L4 8 L9 1.3" fill="none" stroke="#111" stroke-width="1.8"/></svg>
<div class="gc" style="left:33px;width:160px;color:#fff;">AFC系统软件升级与参数更新...</div>
<div class="gc" style="left:193px;width:67px;color:#fff;">运营分公...</div>
<div class="gc" style="left:260px;width:67px;color:#fff;text-align:center;padding:0;">朱博</div>
<div class="gc" style="left:327px;width:68px;color:#fff;padding-left:5px;">流程表单</div>
<div class="gc" style="left:395px;width:54px;color:#fff;padding-left:5px;">已发布</div>
<div class="gc" style="left:449px;width:54px;color:#fff;text-align:center;padding:0;">启用</div>
<div class="gc" style="left:503px;width:80px;color:#fff;padding-left:5px;letter-spacing:0.25px;">2017-01-04...</div>
<div class="gc" style="left:583px;width:80px;color:#fff;padding-left:5px;letter-spacing:0.25px;">2017-03-09...</div>
</div>
</div>
<div class="sb a" style="left:1347px;top:113px;width:14px;height:79px"></div>
<svg class="i" style="left:1349px;top:126px" width="12" height="8"><path d="M1 7 L6 2 L11 7" fill="none" stroke="#555" stroke-width="2"/></svg>
<div class="a" style="left:1347px;top:144px;width:14px;height:13px;background:#c8c8c8"></div>
<svg class="i" style="left:1349px;top:169px" width="12" height="8"><path d="M1 1 L6 6 L11 1" fill="none" stroke="#555" stroke-width="2"/></svg>
<div id="pager" class="a">
<span class="pg" style="left:566px;">每页显示</span>
<div class="pin" style="left:614px;width:29px">20</div>
<span class="pg" style="left:648px;">条/共13条记录</span>
<span class="pg" style="left:727px;">共1页</span>
<span class="pg" style="left:825px;top:4.5px;font-size:11.5px">第</span>
<div class="pin" style="left:841px;width:24px">1</div>
<span class="pg" style="left:869px;top:4.5px;font-size:11.5px">页</span>
<svg class="i" style="left:771px;top:11px" width="10" height="10"><path d="M1 0 V9 M7 0 L2.5 4.5 L7 9" fill="none" stroke="#aaa" stroke-width="1.3"/></svg>
<svg class="i" style="left:803px;top:11px" width="10" height="10"><path d="M6 0 L1.5 4.5 L6 9" fill="none" stroke="#aaa" stroke-width="1.3"/></svg>
<svg class="i" style="left:897px;top:11px" width="10" height="10"><path d="M1 0 L5.5 4.5 L1 9" fill="none" stroke="#aaa" stroke-width="1.3"/></svg>
<svg class="i" style="left:927px;top:11px" width="12" height="12"><path d="M0.8 0.5 L5.5 5 L0.8 9.5 M6.5 0 V10.3" fill="none" stroke="#aaa" stroke-width="1.3"/><path d="M3 12.3 H10.5" stroke="#bbb" stroke-width="1"/></svg>
<div class="a" style="left:950px;top:3.5px;width:34px;height:22.5px;background:#e8e8e8;border:1px solid #cfcfcf;border-radius:4px;font-size:11.5px;letter-spacing:0.6px;padding-left:0.6px;color:#111;text-align:center;line-height:20px">go</div>
</div>
<div id="bar2" class="a">
<div class="a" style="left:451px;top:0;width:1px;height:8px;background:#d0d0d0"></div>
<div class="a" style="left:496px;top:0;width:1px;height:8px;background:#d0d0d0"></div>
<div class="a" style="left:540px;top:0;width:1px;height:8px;background:#d0d0d0"></div>
<svg class="i" style="left:469px;top:2px" width="9" height="5"><path d="M0 5 L4.5 0.5 L9 5Z" fill="#52647e"/></svg>
<svg class="i" style="left:514px;top:2px" width="9" height="5"><path d="M0 0 L4.5 4.5 L9 0Z" fill="#52647e"/></svg>
</div>
<div id="view" class="a">
<div class="a" style="left:0;top:23px;width:977px;height:2px;background:#8fcbeb"></div>
<div class="a" style="left:9px;top:1px;width:59px;height:24px;background:#56b1e3;color:#fff;font-size:11px;line-height:24px;padding-left:14px;white-space:nowrap">视图 1</div>
<svg class="i" style="left:34px;top:20px" width="11" height="5"><path d="M0 5 L5.5 0 L11 5Z" fill="#fff"/></svg>
</div>
<div class="sb a" style="left:1347px;top:231px;width:14px;height:366px"></div>
<svg class="i" style="left:1349px;top:246px" width="12" height="8"><path d="M1 7 L6 2 L11 7" fill="none" stroke="#555" stroke-width="2"/></svg>
<div class="a" style="left:1347px;top:261px;width:14px;height:154px;background:#c8c8c8"></div>
<div class="a" style="left:585px;top:255px;width:562px;height:79px;border:1px solid #c4c4c4;border-bottom:none"></div>
<div class="a" style="left:662px;top:289px;font-family:'Liberation Serif',serif;font-size:27px;line-height:30px;color:#111;white-space:nowrap;transform:scaleX(0.75);transform-origin:0 0">AFC</div>
<div class="a" style="left:703px;top:289px;font-size:26px;letter-spacing:0.28px;line-height:30px;color:#111;white-space:nowrap">系统软件升级与参数更新申请表</div>
<div class="a" style="left:585px;top:333px;width:562px;height:1px;background:#111"></div>
<div class="a" style="left:585px;top:378px;width:562px;height:1px;background:#111"></div>
<div class="a" style="left:585px;top:423px;width:562px;height:1px;background:#111"></div>
<div class="a" style="left:585px;top:468px;width:562px;height:1px;background:#111"></div>
<div class="a" style="left:585px;top:513px;width:562px;height:1px;background:#111"></div>
<div class="a" style="left:585px;top:558px;width:562px;height:1px;background:#111"></div>
<div class="a" style="left:585px;top:333px;width:1px;height:264px;background:#111"></div>
<div class="a" style="left:1146px;top:333px;width:1px;height:264px;background:#111"></div>
<div class="a" style="left:727px;top:333px;width:1px;height:90px;background:#111"></div>
<div class="a" style="left:868px;top:333px;width:1px;height:90px;background:#111"></div>
<div class="a" style="left:1009px;top:333px;width:1px;height:90px;background:#111"></div>
<div class="a" style="left:753px;top:423px;width:1px;height:174px;background:#111"></div>
<div class="fl" style="left:591px;width:141px;top:334px;height:45px;line-height:45px;text-align:center">所属车间</div>
<div class="fl" style="left:874px;width:140px;top:334px;height:45px;line-height:45px;text-align:center">升级负责人</div>
<div class="fl" style="left:591px;width:141px;top:379px;height:45px;line-height:45px;text-align:center">升级前版本号</div>
<div class="fl" style="left:591px;width:141px;top:379px;height:45px;line-height:45px;text-align:center"></div>
<div class="fl" style="left:874px;width:140px;top:379px;height:45px;line-height:45px;text-align:center">升级后版本号</div>
<div class="fl" style="left:591px;width:167px;top:424px;height:45px;line-height:45px;text-align:center">升级类别</div>
<div class="fl" style="left:591px;width:167px;top:469px;height:45px;line-height:45px;text-align:center">升级日期和具体时间</div>
<div class="fl" style="left:591px;width:167px;top:514px;height:45px;line-height:45px;text-align:center">联系人及电话</div>
<div class="fl" style="left:591px;width:167px;top:587px;line-height:18px;text-align:center">升级地点（含配合车</div>
<div class="in" style="left:729px;top:341px;width:138px;height:30px"></div>
<div class="in" style="left:729px;top:386px;width:138px;height:30px"></div>
<div class="in" style="left:1011px;top:341px;width:119px;height:30px"></div>
<div class="in" style="left:1011px;top:386px;width:134px;height:30px"></div>
<div class="in" style="left:755px;top:476px;width:390px;height:30px"></div>
<div class="in" style="left:755px;top:521px;width:390px;height:30px"></div>
<div class="in" style="left:755px;top:560px;width:390px;height:40px"></div>
<div class="a" style="left:1128px;top:561px;width:16px;height:36px;background:#f7f7f7"></div>
<svg class="i" style="left:1131px;top:577px" width="11" height="8"><path d="M1 7 L5.5 2 L10 7" fill="none" stroke="#c4c4c4" stroke-width="2"/></svg>
<svg class="i" style="left:1131px;top:349px" width="14" height="14"><circle cx="6" cy="4" r="3.2" fill="#3a7fd8"/><path d="M1 13 Q1.5 7.5 6 7.5 Q10.5 7.5 11 13Z" fill="#3a7fd8"/><rect x="9" y="12" width="5" height="1.2" fill="#3a7fd8"/></svg>
<div class="a" style="left:774px;top:440px;width:14px;height:14px;border:1px solid #808080;background:#fff"></div>
<div class="fl" style="left:788px;top:424px;height:45px;line-height:45px">培训测试中心测试</div>
<div class="a" style="left:910px;top:440px;width:14px;height:14px;border:1px solid #808080;background:#fff"></div>
<div class="fl" style="left:924px;top:424px;height:45px;line-height:45px">单站测试</div>
<div class="a" style="left:988px;top:440px;width:14px;height:14px;border:1px solid #808080;background:#fff"></div>
<div class="fl" style="left:1002px;top:424px;height:45px;line-height:45px">联调测试</div>
<div class="a" style="left:1066px;top:440px;width:14px;height:14px;border:1px solid #808080;background:#fff"></div>
<div class="fl" style="left:1080px;top:424px;height:45px;line-height:45px">全线推广</div>
<div class="a" style="left:1311px;top:589px;width:76px;height:76px;border-radius:50%;background:#8bbcde;clip-path:inset(0 38px 0 0)"></div>
<svg class="i" style="left:477px;top:90px" width="10" height="5"><path d="M1 4 Q4 1 8 1.5" fill="none" stroke="#777" stroke-width="1.2"/></svg>
</body></html>
